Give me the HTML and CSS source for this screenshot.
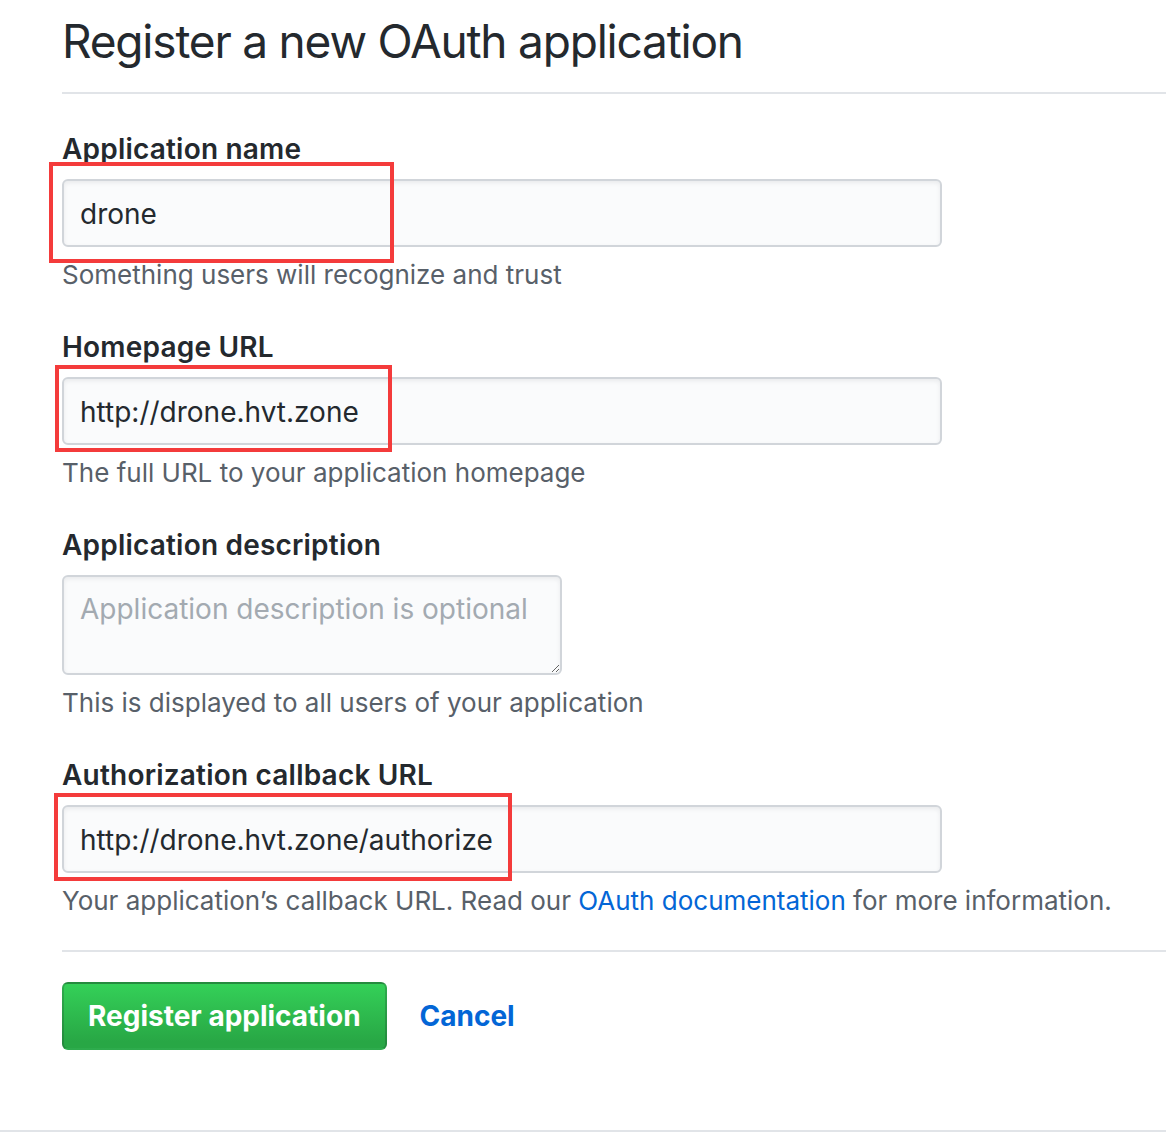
FILE: index.html
```html
<!DOCTYPE html>
<html lang="en">
<head>
<meta charset="utf-8">
<title>Register a new OAuth application</title>
<link rel="stylesheet" href="styles.css">
</head>
<body>
<main class="page">
  <div class="subhead">
    <h1 class="subhead-heading">Register a new OAuth application</h1>
  </div>
  <form class="form">
    <div class="form-group">
      <label class="label">Application name</label>
      <div class="field">
        <input class="input" type="text" value="drone">
        <span class="mark mark-1"></span>
      </div>
      <p class="note">Something users will recognize and trust</p>
    </div>
    <div class="form-group">
      <label class="label">Homepage URL</label>
      <div class="field">
        <input class="input" type="text" value="http://drone.hvt.zone">
        <span class="mark mark-2"></span>
      </div>
      <p class="note">The full URL to your application homepage</p>
    </div>
    <div class="form-group">
      <label class="label">Application description</label>
      <div class="field">
        <textarea class="textarea" placeholder="Application description is optional"></textarea>
      </div>
      <p class="note">This is displayed to all users of your application</p>
    </div>
    <div class="form-group">
      <label class="label">Authorization callback URL</label>
      <div class="field">
        <input class="input" type="text" value="http://drone.hvt.zone/authorize">
        <span class="mark mark-3"></span>
      </div>
      <p class="note">Your application’s callback URL. Read our <a class="link" href="#">OAuth documentation</a> for more information.</p>
    </div>
    <div class="actions">
      <button class="btn-primary" type="button">Register application</button>
      <a class="cancel" href="#">Cancel</a>
    </div>
  </form>
</main>
<div class="footer-rule"></div>
</body>
</html>
```
FILE: styles.css
```css
* { box-sizing: border-box; }
html, body {
  margin: 0;
  padding: 0;
  background: #fff;
}
body {
  font-family: Inter, "Liberation Sans", Arial, sans-serif;
  color: #24292e;
  font-size: 28px;
  line-height: 1.5;
}
.page {
  padding-left: 62px;
}
.subhead {
  border-bottom: 2px solid #e1e4e8;
  padding-top: 12px;
  padding-bottom: 22px;
}
.subhead-heading {
  margin: 0;
  font-size: 46px;
  font-weight: 400;
  line-height: 58px;
  letter-spacing: -1.2px;
}
.form {
  padding-top: 34px;
}
.form-group + .form-group {
  margin-top: 33px;
}
.label {
  display: block;
  font-weight: 600;
  font-size: 28px;
  line-height: 42px;
  letter-spacing: 0.2px;
  margin-bottom: 9px;
}
.field {
  position: relative;
  display: inline-block;
  vertical-align: top;
}
.input {
  display: block;
  width: 880px;
  height: 68px;
  padding: 2px 16px 0;
  font-family: inherit;
  font-size: 28px;
  color: #24292e;
  background: #fafbfc;
  border: 2px solid #d1d5da;
  border-radius: 6px;
  box-shadow: inset 0 2px 4px rgba(27,31,35,0.075);
  outline: none;
}
.textarea {
  display: block;
  width: 500px;
  height: 100px;
  padding: 14px 16px;
  font-family: inherit;
  font-size: 28px;
  line-height: 36px;
  color: #24292e;
  background: #fafbfc;
  border: 2px solid #d1d5da;
  border-radius: 6px;
  box-shadow: inset 0 2px 4px rgba(27,31,35,0.075);
  outline: none;
  resize: vertical;
}
.textarea::placeholder {
  color: #a3aab1;
}
.note {
  margin: 10px 0 0;
  font-size: 26px;
  line-height: 36px;
  color: #586069;
}
.link {
  color: #0366d6;
  text-decoration: none;
}
.mark {
  position: absolute;
  border: 4px solid #f43b3b;
  pointer-events: none;
}
.mark-1 { left: -13px; top: -17px; width: 345px; height: 101px; }
.mark-2 { left: -7px; top: -12px; width: 337px; height: 87px; }
.mark-3 { left: -8px; top: -12px; width: 458px; height: 88px; }
.actions {
  border-top: 2px solid #e1e4e8;
  margin-top: 31px;
  padding-top: 30px;
  display: flex;
  align-items: flex-start;
  gap: 33px;
  height: 180px;
}
.btn-primary {
  height: 68px;
  padding: 0 24px;
  font-family: inherit;
  font-size: 28px;
  font-weight: 700;
  color: #fff;
  background: linear-gradient(180deg, #34d058 0%, #28a745 90%);
  border: 2px solid rgba(27,31,35,0.2);
  border-radius: 6px;
}
.cancel {
  color: #0366d6;
  font-weight: 700;
  font-size: 28px;
  line-height: 68px;
  text-decoration: none;
}
.footer-rule {
  border-top: 2px solid #e1e4e8;
}
```
